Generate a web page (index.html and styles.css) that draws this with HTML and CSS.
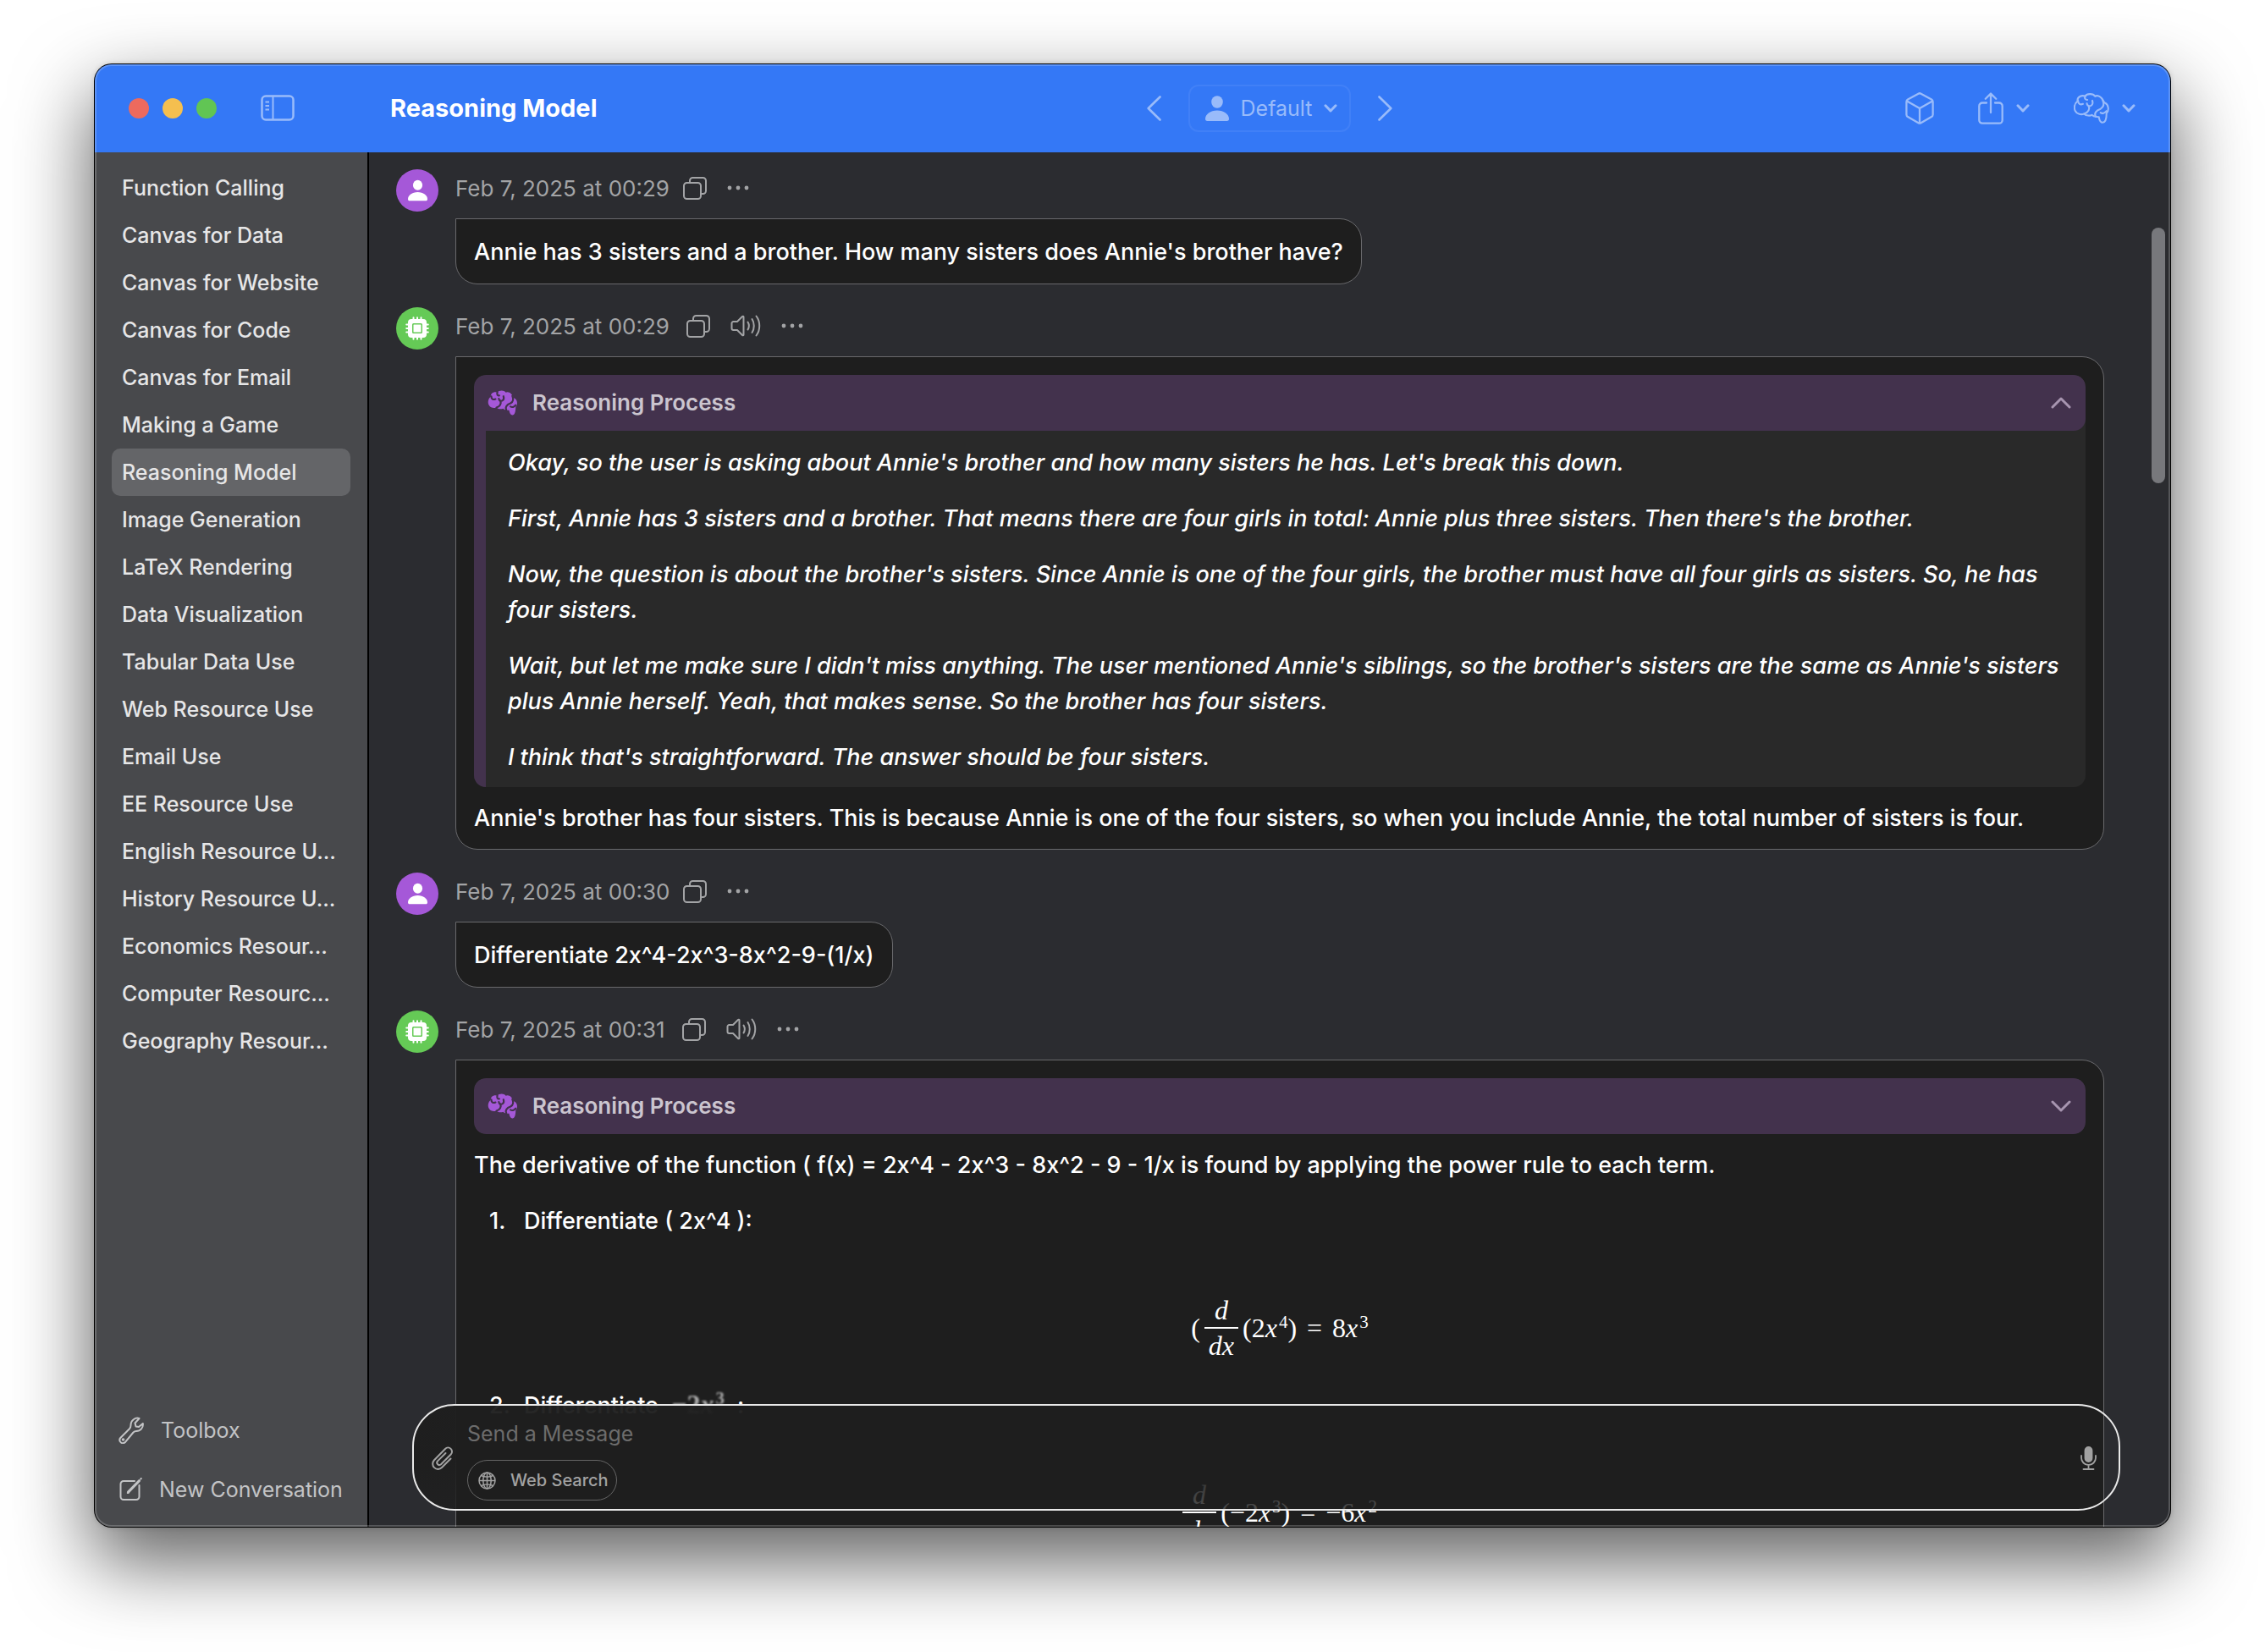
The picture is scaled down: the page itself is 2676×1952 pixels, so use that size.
FILE: index.html
```
<!DOCTYPE html>
<html lang="en">
<head>
<meta charset="utf-8">
<title>Reasoning Model</title>
<link rel="stylesheet" href="styles.css">
</head>
<body>
<svg class="sprite" aria-hidden="true">
  <symbol id="person" viewBox="0 0 28 30"><ellipse cx="14" cy="7.500" rx="6.800" ry="7.300"/><path d="M0 27.500C0 22 6 17.500 14 17.500S28 22 28 27.500C28 29 27.300 30 25.500 30H2.500C.7 30 0 29 0 27.500Z"/></symbol>
  <symbol id="cpu" viewBox="0 0 28 28"><path fill-rule="evenodd" d="M7 3H8.500V1.200a1 1 0 0 1 2 0V3H13V1.200a1 1 0 0 1 2 0V3h2.500V1.200a1 1 0 0 1 2 0V3H21a4 4 0 0 1 4 4v1.500h1.800a1 1 0 0 1 0 2H25V13h1.800a1 1 0 0 1 0 2H25v2.500h1.800a1 1 0 0 1 0 2H25V21a4 4 0 0 1-4 4h-1.500v1.800a1 1 0 0 1-2 0V25H15v1.800a1 1 0 0 1-2 0V25h-2.500v1.800a1 1 0 0 1-2 0V25H7a4 4 0 0 1-4-4v-1.500H1.200a1 1 0 0 1 0-2H3V15H1.200a1 1 0 0 1 0-2H3v-2.500H1.200a1 1 0 0 1 0-2H3V7a4 4 0 0 1 4-4ZM9.500 8A1.500 1.500 0 0 0 8 9.500v9A1.500 1.500 0 0 0 9.500 20h9a1.500 1.500 0 0 0 1.500-1.500v-9A1.500 1.500 0 0 0 18.500 8ZM10 9.500h8a.5.5 0 0 1 .5.5v8a.5.5 0 0 1-.5.5h-8a.5.5 0 0 1-.5-.5v-8a.5.5 0 0 1 .5-.5Z"/></symbol>
  <symbol id="copy" viewBox="0 0 28 27"><path fill="none" stroke="currentColor" stroke-width="2" d="M8 7V4.500A3.500 3.500 0 0 1 11.500 1h12A3.500 3.500 0 0 1 27 4.500v12a3.500 3.500 0 0 1-3.500 3.500H21M4.500 7h13A3.500 3.500 0 0 1 21 10.500v12a3.500 3.500 0 0 1-3.500 3.500h-13A3.500 3.500 0 0 1 1 22.500v-12A3.500 3.500 0 0 1 4.500 7Z"/></symbol>
  <symbol id="dots" viewBox="0 0 26 6"><circle cx="3" cy="3" r="2.400"/><circle cx="13" cy="3" r="2.400"/><circle cx="23" cy="3" r="2.400"/></symbol>
  <symbol id="speaker" viewBox="0 0 36 28"><path fill="none" stroke="currentColor" stroke-width="2" stroke-linecap="round" stroke-linejoin="round" d="M15.500 3.500V24.500C15.500 25.500 14.500 25.500 14 25L8 19H3.500A2 2 0 0 1 1.500 17V11A2 2 0 0 1 3.500 9H8L14 3C14.500 2.500 15.500 2.500 15.500 3.500ZM20.500 9.500C22 12 22 16 20.500 18.500M25.500 6C28.500 10.500 28.500 17.500 25.500 22M30.500 2.500C35.500 9 35.500 19 30.500 25.500"/></symbol>
  <symbol id="brain-shape" viewBox="0 0 130 112"><path d="M14 30C2 38 0 56 6 66C12 78 28 80 38 76C46 84 60 84 66 80C74 88 84 86 92 88C94 100 98 108 106 108C116 108 120 94 120 74C130 64 128 42 114 36C110 34 108 24 100 17C94 10 84 8 78 12C70 0 48 2 42 12C30 6 12 14 14 30Z"/></symbol>
  <symbol id="brain-folds" viewBox="0 0 130 112"><path d="M16 28C16 40 24 44 34 40M42 12C38 20 44 26 50 25M38 76C54 72 60 58 54 46M48 38C50 50 60 50 66 44C70 40 70 34 68 28M106 26C112 40 108 52 98 58C82 64 74 74 80 86M120 66C114 74 104 76 98 72"/></symbol>
  <symbol id="chev-down" viewBox="0 0 16 10"><path fill="none" stroke="currentColor" stroke-width="3" stroke-linecap="round" stroke-linejoin="round" d="M2 1.800 8 8l6-6.200"/></symbol>
</svg>
<div class="window">
  <header class="titlebar">
    <div class="titlebar-left">
      <button class="light light-close" aria-label="Close"></button>
      <button class="light light-min" aria-label="Minimize"></button>
      <button class="light light-zoom" aria-label="Zoom"></button>
      <button class="tool sidebar-toggle" aria-label="Toggle sidebar"><svg width="40" height="32" viewBox="0 0 40 32" fill="none" stroke="currentColor" stroke-width="2.500"><rect x="1.500" y="1.500" width="37" height="28" rx="4.500"/><path d="M14.500 2v27M5.500 8.500h4.500M5.500 13h4.500M5.500 17.500h4.500" stroke-width="2"/></svg></button>
    </div>
    <div class="titlebar-main">
      <h1 class="title">Reasoning Model</h1>
      <div class="nav">
        <button class="tool" aria-label="Previous"><svg width="17" height="30" viewBox="0 0 17 30" fill="none" stroke="currentColor" stroke-width="2.600" stroke-linecap="round" stroke-linejoin="round"><path d="M15.500 1.500 1.700 15l13.800 13.500"/></svg></button>
        <button class="tool picker"><svg width="28" height="30" fill="currentColor"><use href="#person"/></svg><span>Default</span><svg width="16" height="10"><use href="#chev-down"/></svg></button>
        <button class="tool" aria-label="Next"><svg width="17" height="30" viewBox="0 0 17 30" fill="none" stroke="currentColor" stroke-width="2.600" stroke-linecap="round" stroke-linejoin="round"><path d="M1.500 1.500 15.300 15 1.500 28.500"/></svg></button>
      </div>
      <div class="actions">
        <button class="tool" aria-label="Models"><svg width="34" height="38" viewBox="0 0 34 38" fill="none" stroke="currentColor" stroke-width="2.300" stroke-linejoin="round"><path d="M15.500 1.700a3 3 0 0 1 3 0L31 8.600a3 3 0 0 1 1.600 2.600V26.500A3 3 0 0 1 31 29L18.500 36.200a3 3 0 0 1-3 0L3 29a3 3 0 0 1-1.600-2.500V11.200A3 3 0 0 1 3 8.600ZM2 10.500 17 19l15-8.500M17 19v17"/></svg></button>
        <button class="tool with-chev" aria-label="Share"><svg width="30" height="38" viewBox="0 0 30 38" fill="none" stroke="currentColor" stroke-width="2.300" stroke-linecap="round" stroke-linejoin="round"><path d="M10 12.500H5A3.700 3.700 0 0 0 1.300 16.200V33A3.700 3.700 0 0 0 5 36.700H25A3.700 3.700 0 0 0 28.700 33V16.200A3.700 3.700 0 0 0 25 12.500H20M15 24V2M8.800 7.700 15 1.500l6.200 6.200"/></svg><svg width="16" height="10"><use href="#chev-down"/></svg></button>
        <button class="tool with-chev" aria-label="Reasoning"><svg width="42" height="38" fill="none" stroke="currentColor" stroke-width="6.500" stroke-linecap="round" stroke-linejoin="round"><use href="#brain-shape"/><use href="#brain-folds"/></svg><svg width="16" height="10"><use href="#chev-down"/></svg></button>
      </div>
    </div>
  </header>
  <div class="content">
    <aside class="sidebar">
      <nav class="chats">
        <a href="#">Function Calling</a>
        <a href="#">Canvas for Data</a>
        <a href="#">Canvas for Website</a>
        <a href="#">Canvas for Code</a>
        <a href="#">Canvas for Email</a>
        <a href="#">Making a Game</a>
        <a href="#" class="selected" aria-current="page">Reasoning Model</a>
        <a href="#">Image Generation</a>
        <a href="#">LaTeX Rendering</a>
        <a href="#">Data Visualization</a>
        <a href="#">Tabular Data Use</a>
        <a href="#">Web Resource Use</a>
        <a href="#">Email Use</a>
        <a href="#">EE Resource Use</a>
        <a href="#">English Resource U...</a>
        <a href="#">History Resource U...</a>
        <a href="#">Economics Resour...</a>
        <a href="#">Computer Resourc...</a>
        <a href="#">Geography Resour...</a>
      </nav>
      <div class="sidebar-foot">
        <button class="foot-btn"><svg width="30" height="32" viewBox="0 0 30 32" fill="none" stroke="currentColor" stroke-width="2" stroke-linecap="round" stroke-linejoin="round"><path d="M24.500 2C20 .5 14.500 4 14.500 10C14.500 12 14 13 13 14.200L2.300 25A3.800 3.800 0 0 0 7.700 30.300L17.500 18.500C18.500 17.500 19.500 17 21 17C26 17 29.500 13 28.800 8L24 12L20.500 11.500L19.500 7.500Z"/><circle cx="5.500" cy="27" r=".8"/></svg><span>Toolbox</span></button>
        <button class="foot-btn"><svg width="28" height="30" viewBox="1 0 28 30" fill="none" stroke="currentColor" stroke-width="2" stroke-linecap="round" stroke-linejoin="round"><path d="M20 5H7A3.500 3.500 0 0 0 3.500 8.500V23.500A3.500 3.500 0 0 0 7 27H22A3.500 3.500 0 0 0 25.500 23.500V10M13 18.500 11.800 19 12.300 17.500 25.500 4.200M27.300 2.500 27.800 2"/><path d="M12.500 18.200 25.500 4.800" stroke-width="3"/></svg><span>New Conversation</span></button>
      </div>
    </aside>
    <main class="chat">
      <div class="messages">
        <article class="message user">
          <div class="avatar"><svg width="23" height="26" fill="currentColor"><use href="#person"/></svg></div>
          <div class="body">
            <div class="meta"><time>Feb 7, 2025 at 00:29</time><button aria-label="Copy"><svg width="28" height="27"><use href="#copy"/></svg></button><button aria-label="More"><svg width="26" height="6" fill="currentColor"><use href="#dots"/></svg></button></div>
            <div class="bubble"><p>Annie has 3 sisters and a brother. How many sisters does Annie's brother have?</p></div>
          </div>
        </article>
        <article class="message bot">
          <div class="avatar"><svg width="28" height="28" fill="currentColor"><use href="#cpu"/></svg></div>
          <div class="body">
            <div class="meta"><time>Feb 7, 2025 at 00:29</time><button aria-label="Copy"><svg width="28" height="27"><use href="#copy"/></svg></button><button aria-label="Speak"><svg width="36" height="28"><use href="#speaker"/></svg></button><button aria-label="More"><svg width="26" height="6" fill="currentColor"><use href="#dots"/></svg></button></div>
            <div class="bubble">
              <details class="reasoning" open>
                <summary><svg class="brain" width="36" height="32"><use class="shape" href="#brain-shape"/><use class="folds" href="#brain-folds"/></svg><span>Reasoning Process</span><svg class="chev" width="24" height="14" viewBox="0 0 24 14" fill="none" stroke="currentColor" stroke-width="3" stroke-linecap="round" stroke-linejoin="round"><path d="M2 12 12 2l10 10"/></svg></summary>
                <div class="thoughts">
                  <p>Okay, so the user is asking about Annie's brother and how many sisters he has. Let's break this down.</p>
                  <p>First, Annie has 3 sisters and a brother. That means there are four girls in total: Annie plus three sisters. Then there's the brother.</p>
                  <p>Now, the question is about the brother's sisters. Since Annie is one of the four girls, the brother must have all four girls as sisters. So, he has four sisters.</p>
                  <p>Wait, but let me make sure I didn't miss anything. The user mentioned Annie's siblings, so the brother's sisters are the same as Annie's sisters plus Annie herself. Yeah, that makes sense. So the brother has four sisters.</p>
                  <p>I think that's straightforward. The answer should be four sisters.</p>
                </div>
              </details>
              <p>Annie's brother has four sisters. This is because Annie is one of the four sisters, so when you include Annie, the total number of sisters is four.</p>
            </div>
          </div>
        </article>
        <article class="message user">
          <div class="avatar"><svg width="23" height="26" fill="currentColor"><use href="#person"/></svg></div>
          <div class="body">
            <div class="meta"><time>Feb 7, 2025 at 00:30</time><button aria-label="Copy"><svg width="28" height="27"><use href="#copy"/></svg></button><button aria-label="More"><svg width="26" height="6" fill="currentColor"><use href="#dots"/></svg></button></div>
            <div class="bubble"><p>Differentiate 2x^4-2x^3-8x^2-9-(1/x)</p></div>
          </div>
        </article>
        <article class="message bot">
          <div class="avatar"><svg width="28" height="28" fill="currentColor"><use href="#cpu"/></svg></div>
          <div class="body">
            <div class="meta"><time>Feb 7, 2025 at 00:31</time><button aria-label="Copy"><svg width="28" height="27"><use href="#copy"/></svg></button><button aria-label="Speak"><svg width="36" height="28"><use href="#speaker"/></svg></button><button aria-label="More"><svg width="26" height="6" fill="currentColor"><use href="#dots"/></svg></button></div>
            <div class="bubble">
              <details class="reasoning">
                <summary><svg class="brain" width="36" height="32"><use class="shape" href="#brain-shape"/><use class="folds" href="#brain-folds"/></svg><span>Reasoning Process</span><svg class="chev" width="24" height="14" viewBox="0 0 24 14" fill="none" stroke="currentColor" stroke-width="3" stroke-linecap="round" stroke-linejoin="round"><path d="M2 2 12 12 22 2"/></svg></summary>
              </details>
              <p>The derivative of the function ( f(x) = 2x^4 - 2x^3 - 8x^2 - 9 - 1/x is found by applying the power rule to each term.</p>
              <ol class="steps">
                <li><p><span class="num">1.</span>Differentiate ( 2x^4 ):</p>
                  <div class="equation"><span>(</span><span class="frac"><i>d</i><i>dx</i></span><span>(2<i>x</i><sup>4</sup>)</span><span class="rel">=</span><span>8<i>x</i><sup>3</sup></span></div>
                </li>
                <li><p><span class="num">2.</span>Differentiate <span class="inline-math">−2<i>x</i><sup>3</sup></span> :</p>
                  <div class="equation"><span class="frac"><i>d</i><i>dx</i></span><span>(−2<i>x</i><sup>3</sup>)</span><span class="rel">=</span><span>−6<i>x</i><sup>2</sup></span></div>
                </li>
              </ol>
            </div>
          </div>
        </article>
      </div>
      <div class="scroll-thumb"></div>
      <form class="composer">
        <button type="button" class="attach" aria-label="Attach"><svg width="26" height="28" viewBox="0 0 26 28" fill="none" stroke="currentColor" stroke-width="2" stroke-linecap="round" stroke-linejoin="round"><path d="M22.500 14.500 12 25A6.200 6.200 0 0 1 3 16.200L16 3A4.600 4.600 0 0 1 22.700 9.500L11 21.300A2.800 2.800 0 0 1 7 17.400L16.500 8"/></svg></button>
        <div class="fields">
          <input type="text" aria-label="Message" placeholder="Send a Message">
          <button type="button" class="pill"><svg width="21" height="21" viewBox="0 0 21 21" fill="none" stroke="currentColor" stroke-width="1.500"><circle cx="10.500" cy="10.500" r="9.500"/><ellipse cx="10.500" cy="10.500" rx="4.700" ry="9.500"/><path d="M10.500 1v19M1 10.500h19M3.500 4.500c4 2 10 2 14 0M3.500 16.500c4-2 10-2 14 0"/></svg><span>Web Search</span></button>
        </div>
        <button type="button" class="mic" aria-label="Dictate"><svg width="19" height="28" viewBox="0 0 19 28" fill="none" stroke="currentColor" stroke-width="1.800" stroke-linecap="round"><rect x="5.500" y="1" width="8" height="17" rx="4" fill="currentColor"/><path d="M1 11v2.500a8.500 8.500 0 0 0 17 0V11M9.500 22v5M3.500 27h12"/></svg></button>
      </form>
    </main>
  </div>
</div>
</body>
</html>
```
FILE: styles.css
```
* { box-sizing: border-box; }
body {
  margin: 0;
  height: 100vh;
  padding: 76px 112px 148px;
  background: #fff;
  font-family: Inter, "Liberation Sans", sans-serif;
  font-size: 25px;
  color: #fff;
  overflow: hidden;
}
button { appearance: none; border: 0; background: none; padding: 0; margin: 0; font: inherit; color: inherit; }
svg { display: block; flex: none; }
p, h1, ol { margin: 0; padding: 0; }
.sprite { position: absolute; width: 0; height: 0; }

.window {
  position: relative;
  height: 100%;
  display: flex;
  flex-direction: column;
  border-radius: 20px;
  overflow: hidden;
  background: #2b2c30;
  box-shadow: 0 0 0 1px #000, 0 0 6px rgba(0, 0, 0, .2), 0 38px 90px 4px rgba(0, 0, 0, .62);
}
.window::after {
  content: "";
  position: absolute;
  inset: 0;
  border-radius: 20px;
  box-shadow: inset 0 0 0 2px rgba(255, 255, 255, .2);
  pointer-events: none;
}

.titlebar { display: flex; flex: none; height: 104px; background: #3478f6; }
.titlebar-left { width: 324px; display: flex; align-items: center; padding-left: 40px; gap: 16px; }
.light { width: 24px; height: 24px; border-radius: 50%; }
.light-close { background: #ed6a5e; }
.light-min { background: #f5bf4f; }
.light-zoom { background: #61c554; }
.tool { color: #99bbfa; }
.sidebar-toggle { margin-left: 36px; }
.titlebar-main {
  flex: 1;
  display: grid;
  grid-template-columns: 1fr auto 1fr;
  align-items: center;
  padding: 0 41px 0 25px;
}
.title { font-size: 29px; font-weight: 700; line-height: 40px; }
.nav { display: flex; align-items: center; gap: 32px; margin-left: 16px; }
.picker {
  height: 56px;
  display: flex;
  align-items: center;
  padding: 0 14px 0 18px;
  gap: 14px;
  border: 2px solid #4180f7;
  border-radius: 12px;
}
.actions { display: flex; align-items: center; justify-content: flex-end; gap: 52px; }
.with-chev { display: flex; align-items: center; gap: 15px; }

.content { flex: 1; min-height: 0; display: flex; }
.sidebar {
  width: 324px;
  flex: none;
  display: flex;
  flex-direction: column;
  justify-content: space-between;
  background: #48494c;
  border-right: 2px solid #000;
}
.chats { padding: 14px 20px 0; display: flex; flex-direction: column; }
.chats a {
  height: 56px;
  line-height: 57px;
  padding: 0 12px;
  border-radius: 10px;
  color: #e6e6e7;
  font-weight: 500;
  text-decoration: none;
  white-space: nowrap;
  overflow: hidden;
}
.chats .selected { background: #646568; }
.sidebar-foot { display: flex; flex-direction: column; padding: 0 0 9px 28px; color: #c3c4c6; }
.foot-btn { height: 70px; display: flex; align-items: center; gap: 20px; white-space: nowrap; }

.chat { position: relative; flex: 1; min-width: 0; }
.messages {
  height: 100%;
  overflow: hidden;
  padding: 20px 78px 0 32px;
  display: flex;
  flex-direction: column;
  gap: 27px;
}
.message { flex: none; display: grid; grid-template-columns: 50px 1fr; gap: 20px; }
.avatar { width: 50px; height: 50px; border-radius: 50%; display: flex; align-items: center; justify-content: center; }
.user .avatar { background: #a558d8; }
.bot .avatar { background: #65ca56; }
.body { min-width: 0; display: flex; flex-direction: column; align-items: flex-start; }
.meta { height: 58px; padding-bottom: 14px; display: flex; align-items: center; color: #a3a4a6; font-size: 26px; }
.meta button { margin-left: 24px; }
.bot .meta button:first-of-type { margin-left: 20px; }
.user .meta button:first-of-type { margin-left: 16px; }
.bubble {
  background: #1e1e1e;
  border: 1px solid #69696c;
  border-radius: 0 26px 26px 26px;
  padding: 18px 21px 16px;
  font-size: 27px;
  font-weight: 500;
  line-height: 42px;
}
.bot .bubble { align-self: stretch; padding: 21px 21px 15px; }

.reasoning { background: #292929; border-radius: 14px; overflow: hidden; margin-bottom: 16px; }
.reasoning summary {
  height: 66px;
  display: flex;
  align-items: center;
  gap: 17px;
  padding: 0 17px 0 16px;
  list-style: none;
  background: #43324d;
  border-radius: 14px;
  color: #cbc5cf;
  font-size: 26px;
  font-weight: 600;
}
.reasoning[open] summary { border-radius: 14px 14px 14px 0; }
.brain .shape { fill: #a558d8; }
.brain .folds { fill: none; stroke: #43324d; stroke-width: 8px; stroke-linecap: round; }
.chev { margin-left: auto; color: #a795b0; }
.thoughts {
  display: flex;
  flex-direction: column;
  gap: 24px;
  padding: 17px 26px 14px;
  border-left: 14px solid #43324d;
  font-style: italic;
}

.steps { list-style: none; }
.steps li { padding-left: 18px; }
.steps li:first-child { margin-top: 24px; }
.num { display: inline-block; width: 41px; }
.equation {
  display: flex;
  align-items: center;
  justify-content: center;
  gap: 5px;
  margin-left: -18px;
  padding: 64px 0 29px;
  font: 400 32px/40px "Liberation Serif", serif;
}
.equation sup, .inline-math sup { font-size: 21px; line-height: 0; margin-left: 2px; vertical-align: 11px; }
.rel { padding: 0 7px; }
.frac { display: flex; flex-direction: column; align-items: center; }
.frac i:last-child { border-top: 2px solid #fff; padding: 0 5px; }
.inline-math { margin: 0 8px; font: 700 32px/40px "Liberation Serif", serif; color: #aaa; filter: blur(1px); }

.scroll-thumb { position: absolute; top: 89px; right: 6px; width: 16px; height: 302px; border-radius: 8px; background: #77787c; }
.composer {
  position: absolute;
  left: 51px;
  right: 59px;
  bottom: 19px;
  display: flex;
  align-items: center;
  gap: 16px;
  padding: 11px 26px 10px 21px;
  border: 2px solid #e9e9e9;
  border-radius: 50px;
  background: linear-gradient(rgba(30, 30, 30, .96) 50%, rgba(30, 30, 30, .8)) no-repeat 0 0 / calc(100% - 18px) 100%;
  color: #a2a2a2;
}
.fields { flex: 1; display: flex; flex-direction: column; align-items: flex-start; gap: 9px; }
.fields input { width: 100%; height: 44px; padding: 0; border: 0; outline: 0; background: none; color: #fff; font: inherit; }
.fields input::placeholder { color: #6c6c6c; opacity: 1; }
.pill {
  height: 48px;
  display: flex;
  align-items: center;
  gap: 17px;
  padding: 0 9px 0 12px;
  border: 1px solid #656565;
  border-radius: 24px;
  font-size: 20px;
  font-weight: 500;
}
```
